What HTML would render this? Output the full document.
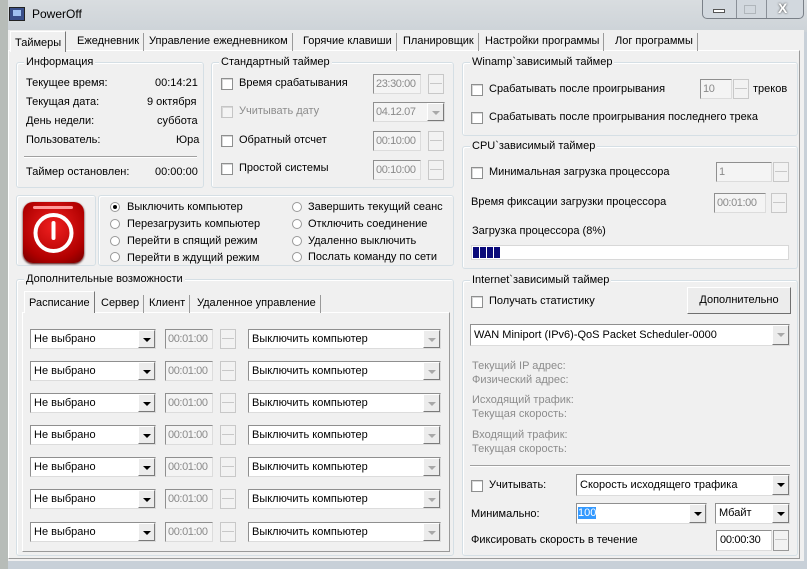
<!DOCTYPE html>
<html><head><meta charset="utf-8"><style>
*{box-sizing:border-box;margin:0;padding:0}
body{width:807px;height:569px;overflow:hidden;background:#c8d0d8;font-family:"Liberation Sans","Noto Sans CJK SC",sans-serif;font-size:11px;color:#000;position:relative}
div,span{position:absolute}
.t{white-space:nowrap;line-height:13px}
.g{color:#8c8c8c}
.grp{border:1px solid #d5dfe5;border-radius:3px;box-shadow:inset 1px 1px 0 #fff}
.gt{background:#f0f0f0;padding:0 2px;white-space:nowrap;line-height:13px}
.cb{width:12px;height:12px;border:1px solid #8e8f8f;background:#fff;box-shadow:inset 1px 1px 0 #d8d8d8}
.cbd{border-color:#c5c5c5;background:#f4f4f4}
.in{border:1px solid #8f8f8f;border-right-color:#dcdcdc;border-bottom-color:#dcdcdc;background:#fff;height:20px;line-height:18px;padding-left:3px;white-space:nowrap;overflow:hidden}
.dis{background:#f4f4f4;color:#8a8a8a;letter-spacing:-0.4px;padding-left:2px}
.sp{width:16px;height:20px;border:1px solid #c8c8c8;background:#f2f2f2}
.sp:after{content:"";position:absolute;left:1px;right:1px;top:8px;border-top:1px solid #c8c8c8}
.db{width:17px;height:18px;top:0;right:0;background:#ececec;border:1px solid #fff;border-right-color:#7a7a7a;border-bottom-color:#7a7a7a}
.db:after{content:"";position:absolute;left:4px;top:7px;border:4px solid transparent;border-top:4px solid #000;border-bottom:0}
.dbg:after{border-top-color:#a8a8a8}
.rd{width:10px;height:10px;border-radius:50%;border:1px solid #999;background:#fff}
.tab{top:33px;height:18px;line-height:16px;padding:0 4px;border-right:1px solid #9a9a9a;white-space:nowrap}
</style></head><body>
<div style="left:0;top:0;width:807px;height:32px;background:linear-gradient(#d9dde0,#cdd3d8)"></div>
<div style="left:0;top:0;width:8px;height:569px;background:#b7bcb8"></div>
<div style="left:9px;top:7px;width:16px;height:14px;background:#3a4f8a;border:1px solid #222"></div>
<div style="left:13px;top:10px;width:8px;height:6px;background:#9fc0f0"></div>
<div class="t" style="left:32px;top:8px;font-size:12px">PowerOff</div>
<div style="left:702px;top:0;width:102px;height:19px;border:1px solid #7a8088;border-top:0;border-radius:0 0 5px 5px;background:#d2d8de"></div>
<div style="left:736px;top:0;width:1px;height:18px;background:#8a9098"></div>
<div style="left:766px;top:0;width:1px;height:18px;background:#8a9098"></div>
<div style="left:713px;top:9px;width:12px;height:4px;background:#fff;border:1px solid #555"></div>
<div style="left:744px;top:5px;width:12px;height:9px;border:1px solid #b0b6bb"></div>
<div class="t" style="left:778px;top:2px;font-size:14px;font-weight:bold;color:#fff;text-shadow:0 0 2px #333">X</div>
<div style="left:8px;top:30px;width:796px;height:531px;background:#f0f0f0"></div>
<div style="left:8px;top:50px;width:792px;height:509px;border:1px solid #9a9a9a;border-top-color:#fff;border-left-color:#fff"></div>
<div class="tab" style="left:10px;top:31px;height:21px;background:#f0f0f0;border:1px solid #fff;border-right-color:#777;border-bottom:0;padding:3px 4px">Таймеры</div>
<div class="tab" style="left:73px">Ежедневник</div>
<div class="tab" style="left:145px">Управление ежедневником</div>
<div class="tab" style="left:299px">Горячие клавиши</div>
<div class="tab" style="left:399px">Планировщик</div>
<div class="tab" style="left:481px">Настройки программы</div>
<div class="tab" style="left:611px">Лог программы</div>

<div class="grp" style="left:16px;top:62px;width:188px;height:126px"></div>
<div class="gt" style="left:24px;top:56px">Информация</div>
<div class="t" style="left:26px;top:77px">Текущее время:</div><div class="t" style="left:155px;top:77px">00:14:21</div>
<div class="t" style="left:26px;top:96px">Текущая дата:</div><div class="t" style="left:147px;top:96px">9 октября</div>
<div class="t" style="left:26px;top:115px">День недели:</div><div class="t" style="left:157px;top:115px">суббота</div>
<div class="t" style="left:26px;top:134px">Пользователь:</div><div class="t" style="left:176px;top:134px">Юра</div>
<div style="left:24px;top:156px;width:173px;height:2px;border-top:1px solid #a0a0a0;border-bottom:1px solid #fff"></div>
<div class="t" style="left:26px;top:166px">Таймер остановлен:</div><div class="t" style="left:155px;top:166px">00:00:00</div>

<div class="grp" style="left:211px;top:62px;width:243px;height:126px"></div>
<div class="gt" style="left:219px;top:56px">Стандартный таймер</div>
<div class="cb" style="left:221px;top:78px"></div><div class="t" style="left:239px;top:77px">Время срабатывания</div>
<div class="in dis" style="left:373px;top:74px;width:48px">23:30:00</div><div class="sp" style="left:428px;top:74px"></div>
<div class="cb cbd" style="left:221px;top:106px"></div><div class="t g" style="left:239px;top:105px">Учитывать дату</div>
<div class="in dis" style="left:373px;top:102px;width:72px">04.12.07<div class="db dbg"></div></div>
<div class="cb" style="left:221px;top:135px"></div><div class="t" style="left:239px;top:134px">Обратный отсчет</div>
<div class="in dis" style="left:373px;top:131px;width:48px">00:10:00</div><div class="sp" style="left:428px;top:131px"></div>
<div class="cb" style="left:221px;top:163px"></div><div class="t" style="left:239px;top:162px">Простой системы</div>
<div class="in dis" style="left:373px;top:160px;width:48px">00:10:00</div><div class="sp" style="left:428px;top:160px"></div>

<div class="grp" style="left:16px;top:195px;width:80px;height:71px"></div>
<div style="left:23px;top:202px;width:61px;height:61px;border-radius:10px;background:radial-gradient(circle at 50% 40%,#f02020,#b00000 70%,#700000);box-shadow:0 1px 2px #400"></div>
<div style="left:33px;top:206px;width:40px;height:3px;background:#ff9a9a;border-radius:2px"></div>
<svg style="position:absolute;left:23px;top:202px" width="61" height="61"><circle cx="30.5" cy="31" r="18" fill="none" stroke="#fff" stroke-width="4"/><line x1="30.5" y1="21" x2="30.5" y2="36" stroke="#fff" stroke-width="4" stroke-linecap="round"/></svg>
<div class="grp" style="left:98px;top:195px;width:356px;height:71px"></div>
<div class="rd" style="left:110px;top:202px"></div><div style="left:113px;top:205px;width:4px;height:4px;border-radius:50%;background:#000"></div>
<div class="t" style="left:127px;top:201px">Выключить компьютер</div>
<div class="rd" style="left:110px;top:219px"></div><div class="t" style="left:127px;top:218px">Перезагрузить компьютер</div>
<div class="rd" style="left:110px;top:236px"></div><div class="t" style="left:127px;top:235px">Перейти в спящий режим</div>
<div class="rd" style="left:110px;top:252px"></div><div class="t" style="left:127px;top:252px">Перейти в ждущий режим</div>
<div class="rd" style="left:292px;top:202px"></div><div class="t" style="left:308px;top:201px">Завершить текущий сеанс</div>
<div class="rd" style="left:292px;top:219px"></div><div class="t" style="left:308px;top:218px">Отключить соединение</div>
<div class="rd" style="left:292px;top:236px"></div><div class="t" style="left:308px;top:235px">Удаленно выключить</div>
<div class="rd" style="left:292px;top:252px"></div><div class="t" style="left:308px;top:251px">Послать команду по сети</div>

<div class="grp" style="left:16px;top:279px;width:438px;height:277px"></div>
<div class="gt" style="left:24px;top:273px">Дополнительные возможности</div>
<div style="left:22px;top:312px;width:428px;height:240px;border:1px solid #9a9a9a;border-top-color:#fff;border-left-color:#fff"></div>
<div class="tab" style="left:24px;top:291px;height:22px;background:#f0f0f0;border:1px solid #fff;border-right-color:#777;border-bottom:0;padding:3px 4px">Расписание</div>
<div class="tab" style="left:97px;top:295px">Сервер</div>
<div class="tab" style="left:145px;top:295px">Клиент</div>
<div class="tab" style="left:193px;top:295px">Удаленное управление</div>
<div id="rows"></div>

<div class="grp" style="left:462px;top:62px;width:336px;height:74px"></div>
<div class="gt" style="left:470px;top:56px">Winamp`зависимый таймер</div>
<div class="cb" style="left:471px;top:84px"></div><div class="t" style="left:489px;top:83px">Срабатывать после проигрывания</div>
<div class="in dis" style="left:700px;top:79px;width:32px">10</div><div class="sp" style="left:733px;top:79px"></div>
<div class="t" style="left:753px;top:83px">треков</div>
<div class="cb" style="left:471px;top:112px"></div><div class="t" style="left:489px;top:111px">Срабатывать после проигрывания последнего трека</div>
<div class="grp" style="left:462px;top:146px;width:336px;height:123px"></div>
<div class="gt" style="left:470px;top:140px">CPU`зависимый таймер</div>
<div class="cb" style="left:471px;top:167px"></div><div class="t" style="left:489px;top:166px">Минимальная загрузка процессора</div>
<div class="in dis" style="left:716px;top:162px;width:56px">1</div><div class="sp" style="left:773px;top:162px"></div>
<div class="t" style="left:471px;top:196px">Время фиксации загрузки процессора</div>
<div class="in dis" style="left:714px;top:193px;width:52px">00:01:00</div><div class="sp" style="left:771px;top:193px"></div>
<div class="t" style="left:472px;top:225px">Загрузка процессора (8%)</div>
<div style="left:471px;top:245px;width:318px;height:15px;background:#fff;border:1px solid #d8d8d8"></div>
<div style="left:473px;top:247px;width:6px;height:11px;background:#0a0a7a"></div>
<div style="left:480px;top:247px;width:6px;height:11px;background:#0a0a7a"></div>
<div style="left:487px;top:247px;width:6px;height:11px;background:#0a0a7a"></div>
<div style="left:494px;top:247px;width:6px;height:11px;background:#0a0a7a"></div>
<div class="grp" style="left:462px;top:280px;width:336px;height:276px"></div>
<div class="gt" style="left:470px;top:274px">Internet`зависимый таймер</div>
<div class="cb" style="left:471px;top:296px"></div><div class="t" style="left:489px;top:295px">Получать статистику</div>
<div style="left:687px;top:287px;width:104px;height:27px;border:1px solid #fff;border-right-color:#707070;border-bottom-color:#707070;background:#ececec;line-height:25px;text-align:center">Дополнительно</div>
<div class="in" style="left:470px;top:324px;width:320px;height:22px;line-height:20px">WAN Miniport (IPv6)-QoS Packet Scheduler-0000<div class="db dbg" style="height:20px"></div></div>
<div class="t g" style="left:472px;top:360px">Текущий IP адрес:</div>
<div class="t g" style="left:472px;top:374px">Физический адрес:</div>
<div class="t g" style="left:472px;top:394px">Исходящий трафик:</div>
<div class="t g" style="left:472px;top:408px">Текущая скорость:</div>
<div class="t g" style="left:472px;top:429px">Входящий трафик:</div>
<div class="t g" style="left:472px;top:443px">Текущая скорость:</div>
<div style="left:470px;top:465px;width:320px;height:2px;border-top:1px solid #a0a0a0;border-bottom:1px solid #fff"></div>
<div class="cb" style="left:471px;top:480px"></div><div class="t" style="left:489px;top:479px">Учитывать:</div>
<div class="in" style="left:576px;top:474px;width:214px;height:22px;line-height:20px">Скорость исходящего трафика<div class="db" style="height:20px"></div></div>
<div class="t" style="left:471px;top:508px">Минимально:</div>
<div class="in" style="left:576px;top:503px;width:131px;height:21px;padding-left:1px"><span style="position:static;background:#3399ff;color:#fff">100</span><div class="db" style="height:19px"></div></div>
<div class="in" style="left:715px;top:503px;width:75px;height:21px">Мбайт<div class="db" style="height:19px"></div></div>
<div class="t" style="left:471px;top:534px">Фиксировать скорость в течение</div>
<div class="in" style="left:716px;top:530px;width:56px;height:21px;letter-spacing:-0.3px">00:00:30</div><div class="sp" style="left:773px;top:530px;height:21px;border-color:#999"></div>
<script>
var ys=[329,361,393,425,457,489,522],h='';
ys.forEach(function(y){
h+='<div class="in" style="left:30px;top:'+y+'px;width:126px">Не выбрано<div class="db"></div></div>'+
'<div class="in dis" style="left:165px;top:'+y+'px;width:48px">00:01:00</div><div class="sp" style="left:220px;top:'+y+'px"></div>'+
'<div class="in" style="left:248px;top:'+y+'px;width:193px">Выключить компьютер<div class="db dbg"></div></div>';});
document.getElementById('rows').outerHTML=h;
</script>
</body></html>
